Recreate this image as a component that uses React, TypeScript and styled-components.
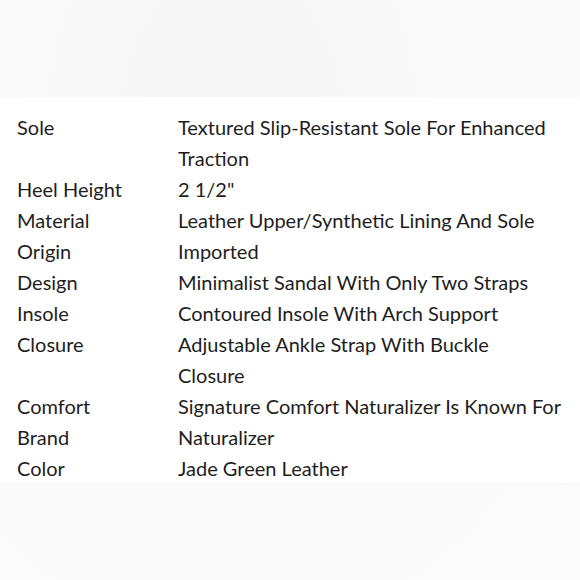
import React from 'react';
import styled, { createGlobalStyle } from 'styled-components';

const GlobalStyle = createGlobalStyle`
  html, body {
    margin: 0;
    padding: 0;
    background: #f9f9f9;
  }
`;

const Page = styled.div`
  width: 580px;
  height: 580px;
  box-sizing: border-box;
  padding-top: 97px;
  background: radial-gradient(ellipse at 40% 20%, #f6f6f6 0%, #fafafa 60%, #fbfbfb 100%);
`;

const SpecPanel = styled.div`
  background: #ffffff;
  padding: 15px 0 0 17px;
  height: 386px;
  box-sizing: border-box;
  display: grid;
  grid-template-columns: 161px 1fr;
  grid-auto-rows: min-content;
  font-family: 'Lato', 'Liberation Sans', sans-serif;
  font-weight: 400;
  font-size: 20px;
  line-height: 31px;
  color: #1e1e1e;
`;

const Label = styled.div`
  white-space: nowrap;
`;

const Value = styled.div`
  white-space: nowrap;
`;

const Line = styled.span`
  display: block;
`;

const specs: [string, string[]][] = [
  ['Sole', ['Textured Slip-Resistant Sole For Enhanced', 'Traction']],
  ['Heel Height', ['2 1/2"']],
  ['Material', ['Leather Upper/Synthetic Lining And Sole']],
  ['Origin', ['Imported']],
  ['Design', ['Minimalist Sandal With Only Two Straps']],
  ['Insole', ['Contoured Insole With Arch Support']],
  ['Closure', ['Adjustable Ankle Strap With Buckle', 'Closure']],
  ['Comfort', ['Signature Comfort Naturalizer Is Known For']],
  ['Brand', ['Naturalizer']],
  ['Color', ['Jade Green Leather']],
];

const App: React.FC = () => {
  return (
    <>
      <GlobalStyle />
      <Page>
        <SpecPanel>
          {specs.map(([label, lines]) => (
            <React.Fragment key={label}>
              <Label>{label}</Label>
              <Value>
                {lines.map((line) => (
                  <Line key={line}>{line}</Line>
                ))}
              </Value>
            </React.Fragment>
          ))}
        </SpecPanel>
      </Page>
    </>
  );
};

export default App;
